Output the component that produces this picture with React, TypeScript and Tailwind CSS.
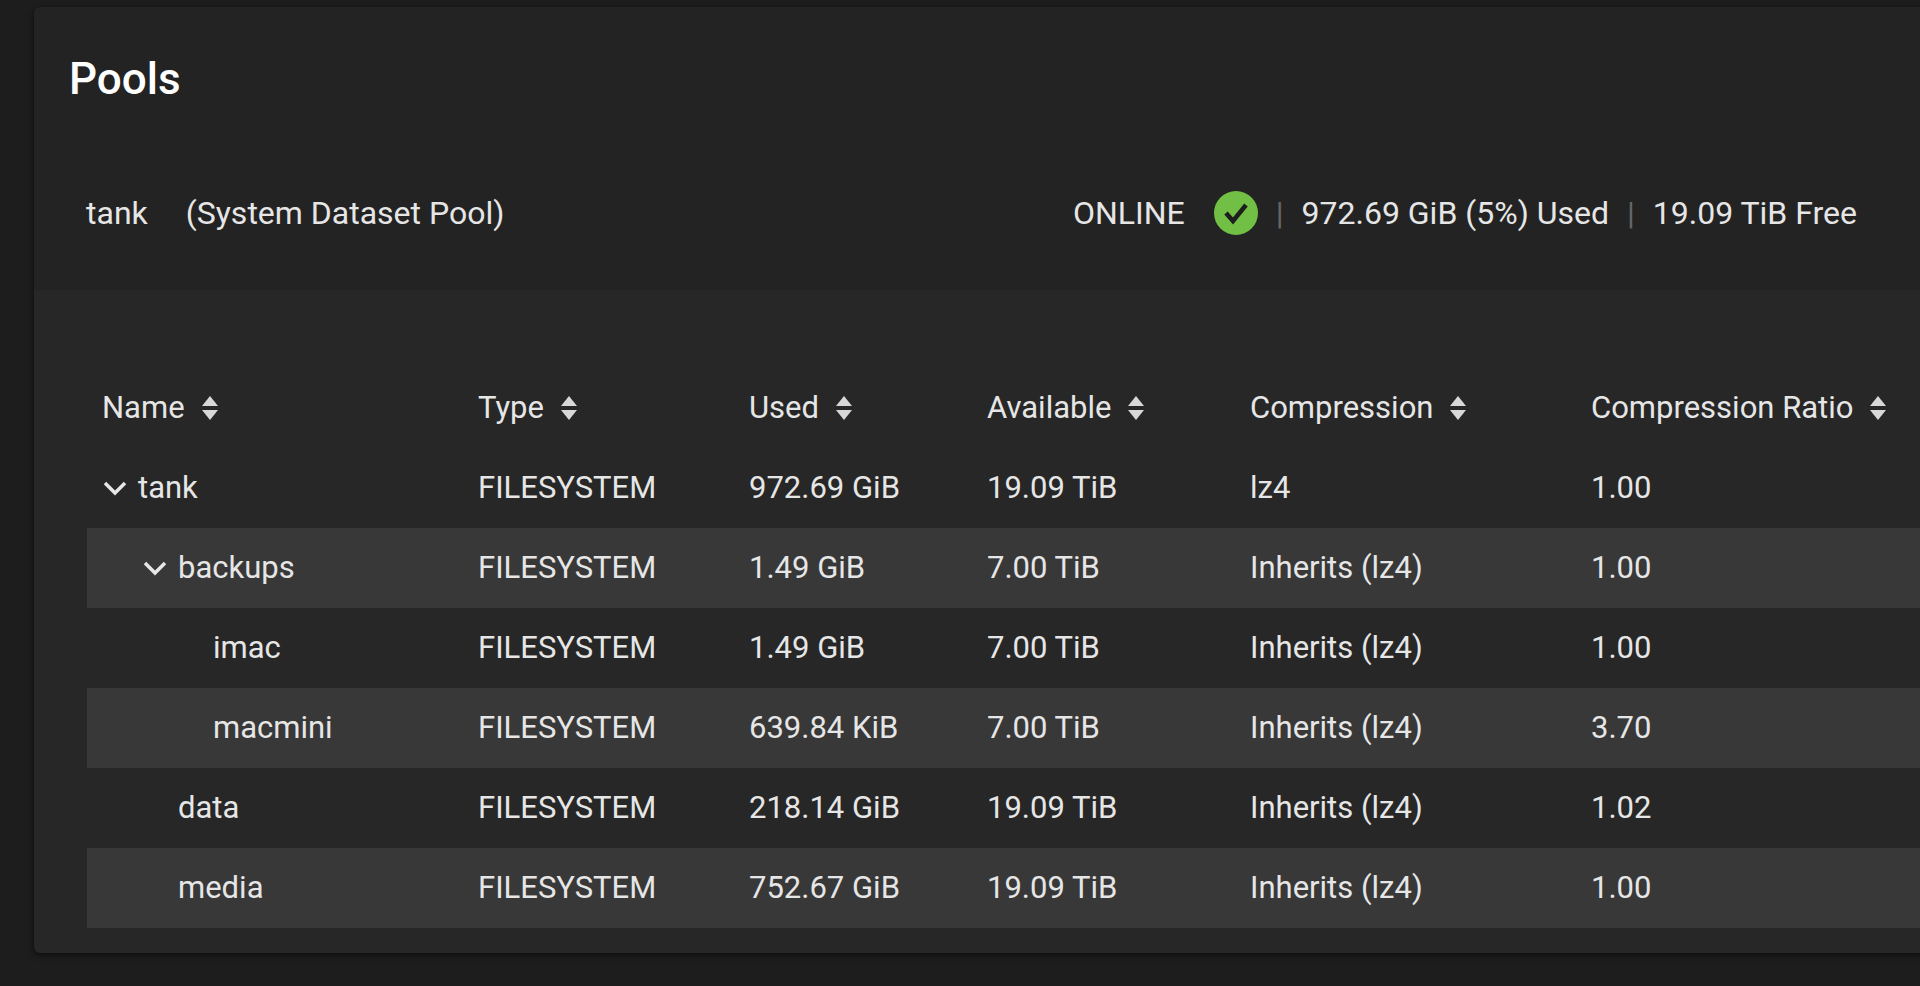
import React from "react";

const Sort = () => (
  <svg width="18" height="26" viewBox="0 0 18 26" className="ml-[16px] inline-block">
    <path d="M9 1 L17 11 H1 Z" fill="#d8d8d8" />
    <path d="M9 25 L17 15 H1 Z" fill="#d8d8d8" />
  </svg>
);

const Chev = () => (
  <svg width="26" height="24" viewBox="0 0 26 24" className="mr-[10px]">
    <path d="M3 7 L13 17 L23 7" stroke="#e6e6e6" strokeWidth="3.5" fill="none" />
  </svg>
);

const rows = [
  { name: "tank", indent: 0, chev: true, used: "972.69 GiB", avail: "19.09 TiB", comp: "lz4", ratio: "1.00" },
  { name: "backups", indent: 40, chev: true, used: "1.49 GiB", avail: "7.00 TiB", comp: "Inherits (lz4)", ratio: "1.00" },
  { name: "imac", indent: 111, chev: false, used: "1.49 GiB", avail: "7.00 TiB", comp: "Inherits (lz4)", ratio: "1.00" },
  { name: "macmini", indent: 111, chev: false, used: "639.84 KiB", avail: "7.00 TiB", comp: "Inherits (lz4)", ratio: "3.70" },
  { name: "data", indent: 76, chev: false, used: "218.14 GiB", avail: "19.09 TiB", comp: "Inherits (lz4)", ratio: "1.02" },
  { name: "media", indent: 76, chev: false, used: "752.67 GiB", avail: "19.09 TiB", comp: "Inherits (lz4)", ratio: "1.00" },
];

const cols = "grid grid-cols-[376px_271px_238px_263px_341px_1fr] items-center";

export default function App() {
  return (
    <div className="min-h-[986px] w-[1920px] overflow-hidden bg-[#1d1d1d] pt-[7px] pl-[34px] text-[#e6e6e6]" style={{ fontFamily: "Roboto, 'Liberation Sans', sans-serif" }}>
      <div className="w-[1900px] h-[946px] rounded-md bg-[#272727] shadow-[0_2px_6px_rgba(0,0,0,0.6)] overflow-hidden">
        <div className="bg-[#232323] h-[283px]">
          <div className="pl-[35px] pt-[50px] text-[44px] font-medium text-white leading-none">Pools</div>
          <div className="flex items-center pl-[52px] pr-[63px] mt-[88px] text-[32px] w-[1886px]">
            <span>tank</span>
            <span className="ml-[38px]">(System Dataset Pool)</span>
            <div className="ml-auto flex items-center">
              <span>ONLINE</span>
              <svg width="44" height="44" viewBox="0 0 44 44" className="ml-[29px]">
                <circle cx="22" cy="22" r="22" fill="#71bf45" />
                <path d="M12 22 L19 30 L32 14" stroke="#1e1e1e" strokeWidth="4.5" fill="none" />
              </svg>
              <span className="mx-[18px] text-[#666]">|</span>
              <span>972.69 GiB (5%) Used</span>
              <span className="mx-[18px] text-[#666]">|</span>
              <span>19.09 TiB Free</span>
            </div>
          </div>
        </div>
        <div className="pl-[53px] pt-[78px] text-[31px]">
          <div className={cols + " h-[80px] pl-[15px]"}>
            {["Name", "Type", "Used", "Available", "Compression", "Compression Ratio"].map((h) => (
              <div key={h} className="flex items-center">{h}<Sort /></div>
            ))}
          </div>
          {rows.map((r, i) => (
            <div key={r.name} className={cols + " h-[80px] pl-[15px] " + (i % 2 ? "bg-[#383838]" : "")}>
              <div className="flex items-center" style={{ paddingLeft: r.indent }}>
                {r.chev && <Chev />}
                {r.name}
              </div>
              <div>FILESYSTEM</div>
              <div>{r.used}</div>
              <div>{r.avail}</div>
              <div>{r.comp}</div>
              <div>{r.ratio}</div>
            </div>
          ))}
        </div>
      </div>
    </div>
  );
}
